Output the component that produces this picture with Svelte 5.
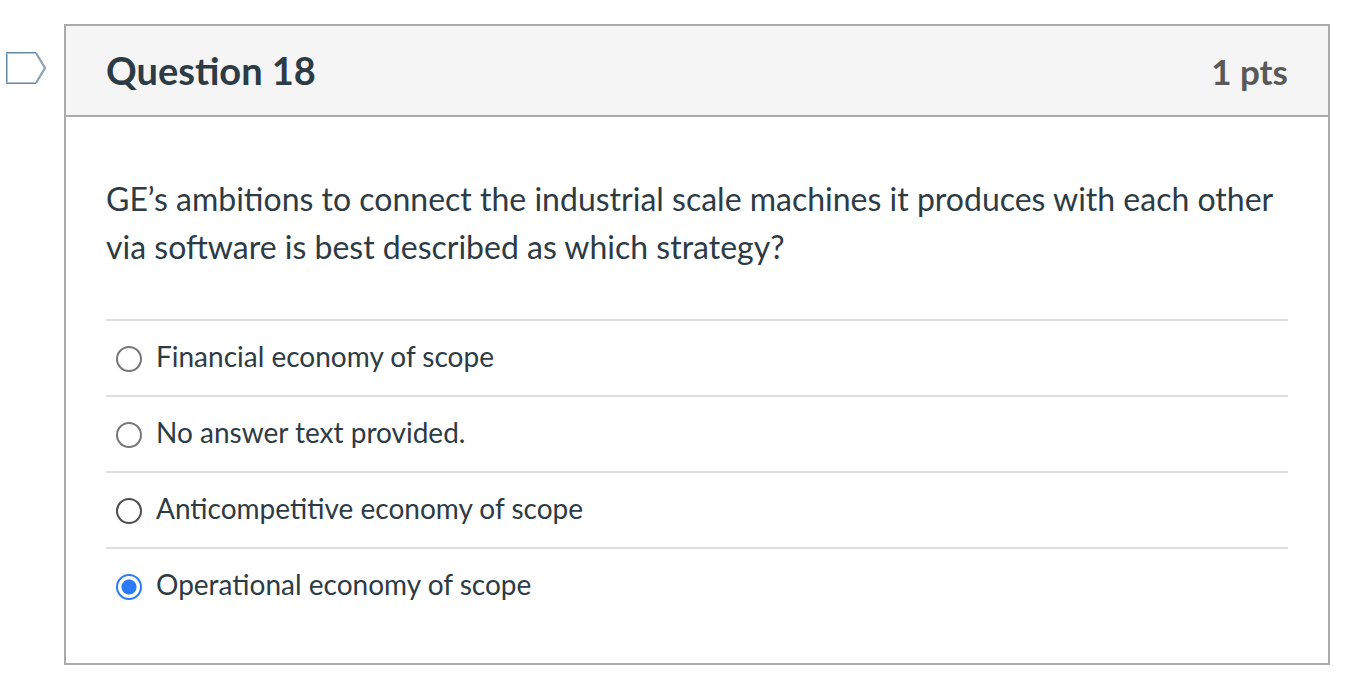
<script>
  let selected = 'operational';

  const answers = [
    { id: 'financial', text: 'Financial economy of scope' },
    { id: 'none', text: 'No answer text provided.' },
    { id: 'anticompetitive', text: 'Anticompetitive economy of scope', dark: true },
    { id: 'operational', text: 'Operational economy of scope' }
  ];
</script>

<style>
  :global(body) {
    background: #fff;
  }

  .quiz {
    display: flex;
    align-items: flex-start;
    padding: 24px 36px 32px 4px;
    font-family: Lato, "Liberation Sans", sans-serif;
    color: #2d3b45;
  }

  .flag {
    flex: none;
    width: 60px;
    padding: 26px 0 0;
    border: 0;
    background: none;
    text-align: left;
    cursor: pointer;
  }

  .flag svg {
    display: block;
  }

  .question {
    flex: 1;
    border: 2px solid #aaa;
  }

  header {
    display: flex;
    justify-content: space-between;
    align-items: flex-start;
    padding: 16px 40px 15px;
    background: #f5f5f5;
    border-bottom: 2px solid #aaa;
  }

  h1 {
    margin: 0;
    font-size: 38px;
    line-height: 56px;
  }

  .points {
    font-size: 35px;
    font-weight: 700;
    line-height: 58px;
    color: #595959;
  }

  .body {
    padding: 58px 40px 40px;
  }

  .prompt {
    margin: 0;
    font-size: 32px;
    line-height: 48px;
  }

  fieldset {
    min-width: 0;
    margin: 48px 0 0;
    padding: 0;
    border: 0;
  }

  .answer {
    display: flex;
    align-items: flex-start;
    padding: 16px 10px 20px;
    border-top: 2px solid #ddd;
    font-size: 28px;
    line-height: 38px;
    cursor: pointer;
  }

  input {
    appearance: none;
    flex: none;
    box-sizing: border-box;
    width: 26px;
    height: 26px;
    margin: 9px 14px 0 0;
    border: 2px solid #767676;
    border-radius: 50%;
    background: #fff;
  }

  input.dark {
    border-color: #4f4f4f;
  }

  input:checked {
    border-color: #2b7bf9;
    background: radial-gradient(circle, #2b7bf9 7px, #fff 8px);
  }
</style>

<div class="quiz">
  <button class="flag" aria-label="Flag question">
    <svg width="44" height="36" viewBox="0 0 44 36" fill="none">
      <path d="M3 3H32L41 18L32 33H3Z" stroke="#b5c5d1" stroke-width="2" />
      <path d="M32 3L41 18L32 33" stroke="#8ba3b5" stroke-width="2" />
      <path d="M32 2.5H2.5V33.5H32" stroke="#5f87a3" stroke-width="1" />
    </svg>
  </button>
  <section class="question">
    <header>
      <h1>Question 18</h1>
      <span class="points">1 pts</span>
    </header>
    <div class="body">
      <p class="prompt" id="prompt">
        GE’s ambitions to connect the industrial scale machines it produces with each other via software is best described as which strategy?
      </p>
      <fieldset aria-labelledby="prompt">
        {#each answers as answer}
          <label class="answer" for={answer.id}>
            <input type="radio" name="answer" id={answer.id} class:dark={answer.dark} value={answer.id} bind:group={selected} />
            <span>{answer.text}</span>
          </label>
        {/each}
      </fieldset>
    </div>
  </section>
</div>
